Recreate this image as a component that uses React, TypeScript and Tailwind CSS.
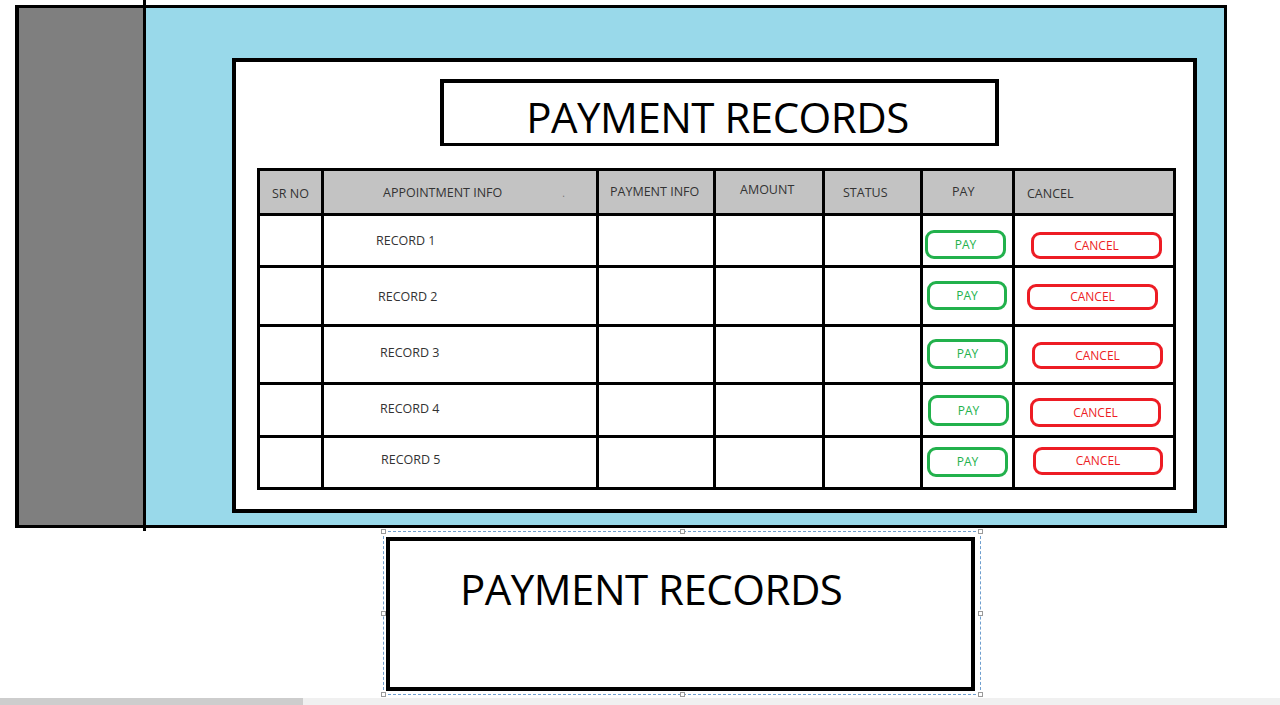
import React from "react";

const headers = [
  { label: "SR NO", cls: "pl-[12px] pt-[4px]", dot: false },
  { label: "APPOINTMENT INFO", cls: "pl-[59px] pt-[2px]", dot: true },
  { label: "PAYMENT INFO", cls: "pl-[11px]", dot: false },
  { label: "AMOUNT", cls: "pl-[24px] pb-[3px]", dot: false },
  { label: "STATUS", cls: "pl-[18px] pt-[2px]", dot: false },
  { label: "PAY", cls: "pl-[29px]", dot: false },
  { label: "CANCEL", cls: "pl-[12px] pt-[4px]", dot: false },
];

const rows = [
  {
    rec: "RECORD 1",
    recCls: "pl-[52px] pt-[1px]",
    pay: "ml-[2px] mt-[14px] w-[81px] h-[29px]",
    cancel: "ml-[16px] mt-[16px] w-[131px] h-[27px]",
  },
  {
    rec: "RECORD 2",
    recCls: "pl-[54px] pt-[2px]",
    pay: "ml-[4px] mt-[13px] w-[80px] h-[29px]",
    cancel: "ml-[12px] mt-[16px] w-[131px] h-[26px]",
  },
  {
    rec: "RECORD 3",
    recCls: "pl-[56px] pb-[3px]",
    pay: "ml-[4px] mt-[12px] w-[81px] h-[30px]",
    cancel: "ml-[17px] mt-[15px] w-[131px] h-[27px]",
  },
  {
    rec: "RECORD 4",
    recCls: "pl-[56px] pb-[2px]",
    pay: "ml-[5px] mt-[10px] w-[81px] h-[31px]",
    cancel: "ml-[15px] mt-[13px] w-[131px] h-[29px]",
  },
  {
    rec: "RECORD 5",
    recCls: "pl-[57px] pb-[5px]",
    pay: "ml-[4px] mt-[9px] w-[81px] h-[30px]",
    cancel: "ml-[18px] mt-[9px] w-[130px] h-[28px]",
  },
];

const cell = "border-r-[3px] border-b-[3px] border-black";

function Handle({ cls }: { cls: string }) {
  return (
    <div
      className={`absolute w-[5px] h-[5px] bg-white border border-[#9a9a9a] ${cls}`}
    />
  );
}

export default function App() {
  return (
    <div className="w-[1280px] h-[705px] flex flex-col bg-white overflow-hidden font-['Open_Sans',sans-serif] text-[#333]">
      {/* main frame */}
      <div className="pl-[15px] pt-[5px]">
        <div className="relative flex w-[1212px] h-[523px] border-[3px] border-l-[4px] border-black">
          <div className="w-[124px] bg-[#7f7f7f]" />
          <div className="absolute left-[124px] top-[-8px] w-[3px] h-[531px] bg-black" />
          <div className="flex-1 bg-[#99d9ea] pl-[89px] pt-[50px]">
            <div className="w-[965px] h-[455px] border-[4px] border-black bg-white">
              {/* title */}
              <div className="mt-[17px] ml-[204px] w-[559px] h-[67px] border-[4px] border-b-[3px] border-black flex items-center justify-center pt-[7px] pr-[4px]">
                <span className="text-[42px] leading-none tracking-[-0.5px] text-black">
                  PAYMENT RECORDS
                </span>
              </div>
              {/* table */}
              <div className="mt-[22px] ml-[21px] w-[919px] grid grid-cols-[64px_275px_117px_109px_98px_92px_161px] grid-rows-[45px_52px_59px_58px_53px_52px] border-t-[3px] border-l-[3px] border-black">
                {headers.map((h) => (
                  <div
                    key={h.label}
                    className={`${cell} bg-[#c3c3c3] flex items-center text-[12.5px] leading-none ${h.cls}`}
                  >
                    <span>{h.label}</span>
                    {h.dot && (
                      <span className="ml-[60px] text-[#777] text-[10px]">.</span>
                    )}
                  </div>
                ))}
                {rows.map((r) => (
                  <React.Fragment key={r.rec}>
                    <div className={cell} />
                    <div
                      className={`${cell} flex items-center text-[12.5px] leading-none ${r.recCls}`}
                    >
                      {r.rec}
                    </div>
                    <div className={cell} />
                    <div className={cell} />
                    <div className={cell} />
                    <div className={cell}>
                      <div
                        className={`${r.pay} border-[3px] border-[#22b14c] rounded-[9px] flex items-center justify-center text-[12px] leading-none text-[#22b14c]`}
                      >
                        PAY
                      </div>
                    </div>
                    <div className={cell}>
                      <div
                        className={`${r.cancel} border-[3px] border-[#ed1c24] rounded-[9px] flex items-center justify-center text-[12px] leading-none text-[#ed1c24]`}
                      >
                        CANCEL
                      </div>
                    </div>
                  </React.Fragment>
                ))}
              </div>
            </div>
          </div>
        </div>
      </div>

      {/* selected box below */}
      <div className="ml-[383px] mt-[3px] relative w-[598px] h-[164px] border border-dashed border-[#6f9fcf] pl-[2px] pt-[5px]">
        <Handle cls="left-[-3px] top-[-3px]" />
        <Handle cls="left-[296px] top-[-3px]" />
        <Handle cls="right-[-3px] top-[-3px]" />
        <Handle cls="left-[-3px] top-[79px]" />
        <Handle cls="right-[-3px] top-[79px]" />
        <Handle cls="left-[-3px] bottom-[-3px]" />
        <Handle cls="left-[296px] bottom-[-3px]" />
        <Handle cls="right-[-3px] bottom-[-3px]" />
        <div className="w-[589px] h-[154px] border-[4px] border-black bg-white pl-[70px] pt-[27px]">
          <span className="text-[42px] leading-none tracking-[-0.5px] text-black">
            PAYMENT RECORDS
          </span>
        </div>
      </div>

      {/* scrollbar */}
      <div className="mt-auto h-[7px] bg-[#f0f0f0] flex">
        <div className="w-[303px] bg-[#cdcdcd]" />
      </div>
    </div>
  );
}
